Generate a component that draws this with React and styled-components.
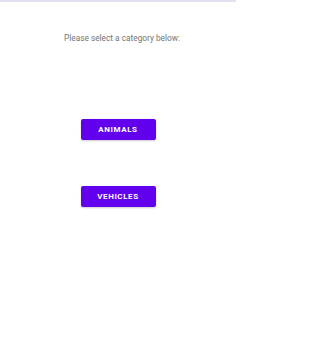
import React from 'react';
import styled, { createGlobalStyle } from 'styled-components';

const GlobalStyle = createGlobalStyle`
    html, body {
        margin: 0;
        padding: 0;
        background: #ffffff;
        font-family: Roboto, "Liberation Sans", sans-serif;
    }
`;

const Screen = styled.div`
    width: 236px;
    height: 364px;
    box-sizing: border-box;
    border-top: 2px solid #e3e0f1;
    display: flex;
    flex-direction: column;
    align-items: center;
    background: #ffffff;
`;

const Prompt = styled.p`
    margin: 31px 0 0;
    padding-left: 8px;
    font-size: 8.3px;
    line-height: 11px;
    color: #757575;
`;

const CategoryButton = styled.button`
    margin-top: ${(p) => p.gap}px;
    width: 75px;
    height: 21px;
    padding: 0;
    border: none;
    border-radius: 2px;
    background: #6200ee;
    color: #ffffff;
    font-family: Roboto, "Liberation Sans", sans-serif;
    font-size: 8px;
    font-weight: 700;
    letter-spacing: 0.6px;
    text-transform: uppercase;
    box-shadow: 0 1px 2px rgba(0, 0, 0, 0.2);
    cursor: pointer;
`;

export default function App() {
    return (
        <>
            <GlobalStyle />
            <Screen>
                <Prompt>Please select a category below:</Prompt>
                <CategoryButton gap={75}>Animals</CategoryButton>
                <CategoryButton gap={46}>Vehicles</CategoryButton>
            </Screen>
        </>
    );
}
